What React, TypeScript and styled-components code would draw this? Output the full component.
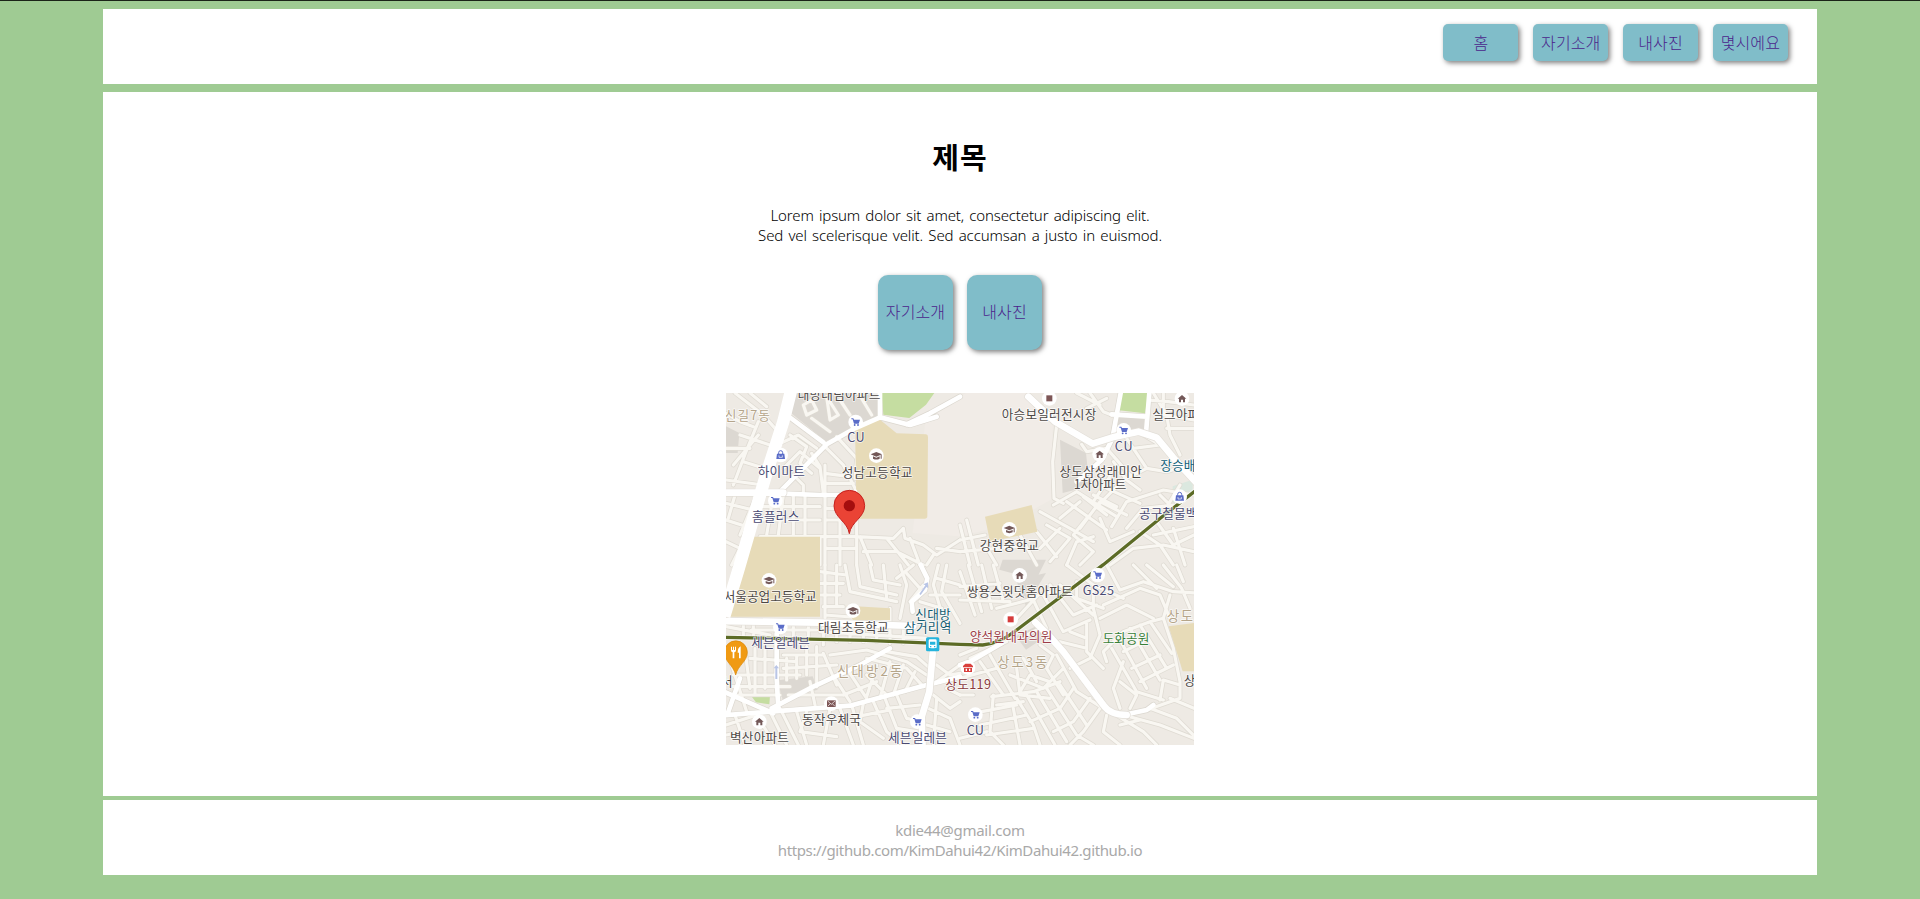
import React from "react";
import styled, { createGlobalStyle } from "styled-components";

const GlobalStyle = createGlobalStyle`
  * { box-sizing: border-box; }
  body {
    margin: 0;
    background: #9fcb93;
    font-family: "Noto Sans", "Noto Sans CJK KR", sans-serif;
    font-size: 16px;
    line-height: 20px;
    color: #000;
  }
  p, h1 { margin: 0; }
`;

const Page = styled.div`
  height: 899px;
  border-top: 1px solid #1b2418;
  padding: 8px 103px 0;
  display: flex;
  flex-direction: column;
  overflow: hidden;
`;

const Header = styled.header`
  flex: none;
  height: 75px;
  margin-bottom: 8px;
  background: #fff;
  display: flex;
  align-items: flex-start;
  justify-content: flex-end;
  gap: 14.8px;
  padding: 15px 29.2px 0 0;
`;

const LinkButton = styled.a<{ $square?: boolean }>`
  width: 75px;
  height: ${(p) => (p.$square ? 75 : 37.4)}px;
  padding-bottom: ${(p) => (p.$square ? 3 : 1.5)}px;
  border-radius: ${(p) => (p.$square ? 10 : 5)}px;
  background: #80bdc9;
  box-shadow: 2px 2px 5px rgba(0, 0, 0, 0.5);
  color: #4b1f8b;
  font-family: "Noto Sans CJK KR", sans-serif;
  font-weight: 300;
  letter-spacing: 0.1px;
  text-decoration: none;
  white-space: nowrap;
  display: flex;
  align-items: center;
  justify-content: center;
`;

const Main = styled.main`
  flex: none;
  height: 704px;
  margin-bottom: 4px;
  padding-top: 44px;
  background: #fff;
  display: flex;
  flex-direction: column;
  align-items: center;
`;

const Title = styled.h1`
  font-family: "Noto Sans CJK KR", sans-serif;
  font-size: 29px;
  letter-spacing: 1px;
  line-height: 40px;
  font-weight: 700;
`;

const Intro = styled.div`
  margin-top: 29px;
  text-align: center;
  font-size: 15px;
  font-weight: 350;
  word-spacing: 1.5px;
`;

const Line = styled.p<{ $spacing: number }>`
  letter-spacing: ${(p) => p.$spacing}px;
  white-space: nowrap;
`;

const Shortcuts = styled.div`
  display: flex;
  gap: 14px;
  margin: 30px 0 43px;
`;

const MapView = styled.svg`
  display: block;
  width: 468px;
  height: 352px;
  overflow: hidden;
`;

const Footer = styled.footer`
  flex: none;
  height: 75px;
  padding-top: 20px;
  background: #fff;
  color: #a9a9a9;
  text-align: center;
  font-size: 15px;
`;

/* The map is made of four tiles; each has its own origin. */
type Tile = { x: number; y: number; minor: string; street: string; major: string };

const tiles: Tile[] = [
  {
    x: -18,
    y: -24,
    minor:
      "M18 85L60 110L100 125M45 24L130 90L165 130M90 24L140 65M115 110L80 195L40 300M18 190H90M60 150L150 180M70 230L150 255M18 285L130 300M40 240L115 150M18 355L120 380M18 405L95 430M110 330L60 450M45 330L25 400M18 470L60 490L35 540M210 150L260 185L240 235L275 265M170 180L235 150L290 190M190 250L240 200L300 250M220 270L250 300V325M275 205L300 245L310 325M315 185L370 240L405 310M350 155L410 220L405 280M315 265L390 275M315 295H400M315 240V540M360 330V540M300 455L410 455L520 460L550 430M410 400V540M420 455L455 540M315 370H405M315 405H405M160 330L140 450M190 330L175 450M220 330V450M255 330V450M130 365H300M120 405H300M120 455H300V540M315 490H410M430 500H530L610 540M500 460L565 540M550 430L555 460L610 480L650 510L720 465M570 460L600 540M640 510L620 540M650 490L720 500M250 60L275 45L290 75L260 90ZM275 100L330 140M320 35L355 90L330 105ZM360 45L390 90M415 24L455 90",
    street: "M200 90L310 172M650 95L570 120L480 97L405 130L320 178L180 320M480 24V98M720 35L630 85L560 118M190 326L300 330L400 330M405 320L415 380",
    major: "M215 10L190 110L135 280L55 555L15 680M0 323H190",
  },
  {
    x: 702,
    y: -24,
    minor:
      "M290 120L278 230L282 340L310 355M365 178L380 200L440 190L510 270M420 60L350 24M390 24L430 80L455 90M440 40L380 70M580 24L620 90L630 150M560 45L625 50L702 60M610 24V90L702 105M620 130H702M630 150L660 210M600 180L550 150M500 160L560 250L620 260L702 235M520 190L600 180M560 250L490 285L420 355M460 230L500 285L540 315M450 275L400 350M280 360L350 320L470 395M300 400L360 350M240 380L330 430L400 470M320 350L440 435M370 335L440 390M400 330L470 365M440 310L540 355M360 430L420 350L500 390M260 420L330 460L270 530M300 430L240 490M380 400L340 450L400 500L360 540M420 400L450 470L520 440M400 455L350 470L320 540M455 425L500 350L610 315L702 330M500 430L550 370L640 360M580 450L702 425M450 540L520 490L610 480L702 500M540 440L600 480L640 540M590 410L640 480L702 450M640 430L675 540M0 420L30 540M20 405L55 540M0 465L75 450M0 500L170 485M75 480L110 540M180 450L230 540M230 440L290 515M660 300L630 350M600 330L650 380",
    street: "M482 24L458 155M455 88L560 95M568 24L558 145M460 155L425 225L350 290",
    major: "M205 35L285 110L398 176L465 155L535 140L590 158L640 218L720 305",
  },
  {
    x: -18,
    y: 516,
    minor:
      "M315 0V160M350 0V120M300 20L380 30M300 55H370M300 90H360M310 125H370M375 0L390 80L530 110M410 0L420 65L530 90M450 0L460 45L540 60M490 0L500 100M540 0L560 60L540 160M560 25L600 70M580 0L530 40M655 0L640 60L670 160M680 0L665 80L720 175M630 90H720M610 60L570 110M650 40L720 60M600 110L665 130M510 130V185M395 120L400 165M315 150L510 165M18 185L150 210M70 175V215M100 175V215M220 175V215M265 175V215M310 175V240M350 180V230M390 180V230M430 185V230M470 185V230M510 185V235M550 185V235M95 195H290M300 200L620 220M35 300L80 440M75 255L90 370M105 250V385M135 250V370M90 280L230 290M40 330H240M35 365H210M55 390H180M200 280V345M230 270V340M260 245V330M290 245V365M190 270H310M190 310L350 300M310 265L350 360M270 350L285 420M205 390H380M345 340L390 410M380 310L440 400M370 390L470 350M440 330L500 390M330 270L440 255L560 290L620 330M440 280L560 310L610 365M500 260L590 275L630 310M470 300L440 395M510 290L480 400M550 300L520 390M585 320L555 380M18 480L110 450L165 540M45 450L75 540M18 510L70 500M150 440L200 540M180 430L235 540M230 440L260 540M260 440L240 500L350 515M330 430L310 540M360 430L400 540M395 420L430 540M430 415L420 470L490 520M460 410L500 500L550 540M495 400L530 490L590 500M530 390L560 460L605 470M500 430L600 420M410 455L510 435M640 390L690 430L720 410M625 430L690 460L720 540M620 480L690 500M650 400L640 540M680 370L720 390M650 300L690 330L720 325M650 350L720 300",
    street: "M602 0L622 40L615 75L575 110L578 140M170 205V340L175 430M155 430L280 365L420 300L510 250M0 375L80 410L160 445M0 452L150 440L390 422L600 365L720 335M60 340L25 440",
    major: "M0 168L300 173L580 183M638 265L628 380L605 455L608 555",
  },
  {
    x: 702,
    y: 516,
    minor:
      "M0 20L45 150M25 0L65 140M65 0L95 130M100 0L130 110M0 65L120 55M0 105L150 110M110 130L225 100M170 160L235 90L280 80M220 105L260 190M250 90L310 200L390 165M270 60L340 150L410 120M300 60L400 150M320 0L400 60L490 100M350 50V100L430 130M400 60L400 130L420 210M430 120L540 70L600 90L630 160M440 0L480 75L550 50L640 80L720 85M520 0L590 70M560 0L640 65M610 0L665 70L690 130M650 0L670 50M630 90L610 160L640 250L660 350V400L560 435M610 160L570 170L635 265M570 170L490 200L430 260L440 290M540 180L620 310M510 190L600 345M480 225L560 370M455 250L530 380L610 405M580 160L500 120L420 160M490 260L550 230M515 310L600 270M540 350L640 300M600 405L610 345L660 360M490 290L460 370L480 430M480 350L530 390L510 430M420 210L390 280L330 310M380 170V260L430 310M330 200L380 220M300 230L380 250M250 185L180 220M240 240L280 270L260 310L310 390M290 270L350 380L430 430M310 310L250 370L150 330M270 350L210 330L180 380M170 310L180 390L270 400M190 280L230 350M30 280L140 230M60 290L130 390M90 270L165 400M0 340L110 310M95 395L220 380L300 350M170 400L220 480L240 540M200 390L285 540M230 380L320 530M260 370L350 510L400 540M300 360L380 480M340 370L300 430L210 470M390 400L340 470L280 500M420 430L370 500L330 540M110 420L190 410M100 390L90 500L130 540M65 440L170 420M60 480L200 450M80 510L220 490M160 430L180 540M440 450L430 500L480 540M460 445L550 500L590 540M490 450L600 480L702 520M570 430L650 460L700 510M630 400L702 430M480 480L540 465M0 270L50 250M0 390H40M0 520L80 500",
    street: "M125 235L30 290L0 300M490 450L560 435L580 420",
    major: "M226 172L270 215L310 260L430 420Q450 450 500 450",
  },
];

type LabelData = { x: number; y: number; w: number; text: string; color?: string; size?: number };

/* x is the left edge and y the baseline, both in map units. */
const labels: LabelData[] = [
  { x: 215, y: 19, w: 248, text: "대방대림아파트" },
  { x: -4, y: 80, w: 136, text: "신길7동", color: "#b5a58a", size: 38 },
  { x: 364, y: 148, w: 52, text: "CU", color: "#4a4a72", size: 38 },
  { x: 95, y: 248, w: 142, text: "하이마트", color: "#4a4a72" },
  { x: 347, y: 251, w: 212, text: "성남고등학교" },
  { x: 78, y: 383, w: 142, text: "홈플러스", color: "#4a4a72" },
  { x: 827, y: 79, w: 284, text: "아승보일러전시장" },
  { x: 1279, y: 79, w: 176, text: "실크아파트" },
  { x: 1166, y: 173, w: 54, text: "CU", color: "#4a4a72", size: 38 },
  { x: 1000, y: 248, w: 248, text: "상도삼성래미안" },
  { x: 1043, y: 287, w: 158, text: "1차아파트" },
  { x: 1303, y: 230, w: 140, text: "장승배기", color: "#116078" },
  { x: 1239, y: 374, w: 210, text: "공구철물백화", color: "#4a4a72" },
  { x: 761, y: 471, w: 178, text: "강현중학교" },
  { x: -7, y: 625, w: 279, text: "서울공업고등학교" },
  { x: 276, y: 716, w: 212, text: "대림초등학교" },
  { x: 76, y: 761, w: 176, text: "세븐일레븐", color: "#4a4a72" },
  { x: 568, y: 679, w: 106, text: "신대방", color: "#125b70" },
  { x: 534, y: 718, w: 142, text: "삼거리역", color: "#125b70" },
  { x: 333, y: 848, w: 196, text: "신대방2동", color: "#b5a58a", size: 40 },
  { x: -15, y: 878, w: 35, text: "서" },
  { x: 228, y: 992, w: 177, text: "동작우체국" },
  { x: 12, y: 1047, w: 177, text: "벽산아파트" },
  { x: 486, y: 1047, w: 177, text: "세븐일레븐", color: "#4a4a72" },
  { x: 722, y: 609, w: 318, text: "쌍용스윗닷홈아파트" },
  { x: 1070, y: 607, w: 94, text: "GS25", color: "#4a4a72", size: 38 },
  { x: 731, y: 743, w: 248, text: "양석원내과의원", color: "#9c3d48" },
  { x: 1130, y: 750, w: 140, text: "도화공원", color: "#388038" },
  { x: 1323, y: 684, w: 120, text: "상도동", color: "#b5a58a", size: 40 },
  { x: 814, y: 822, w: 150, text: "상도3동", color: "#b5a58a", size: 40 },
  { x: 658, y: 889, w: 137, text: "상도119", color: "#8a3a3c" },
  { x: 1373, y: 875, w: 70, text: "상도" },
  { x: 722, y: 1026, w: 52, text: "CU", color: "#4a4a72", size: 38 },
];

type PoiKind = "cart" | "cap" | "home" | "bag" | "shop" | "clinic" | "mail" | "fire";

const pois: { x: number; y: number; kind: PoiKind }[] = [
  { x: 389, y: 87, kind: "cart" },
  { x: 164, y: 186, kind: "bag" },
  { x: 451, y: 188, kind: "cap" },
  { x: 148, y: 323, kind: "cart" },
  { x: 970, y: 16, kind: "shop" },
  { x: 1368, y: 17, kind: "home" },
  { x: 1193, y: 112, kind: "cart" },
  { x: 1121, y: 184, kind: "home" },
  { x: 1361, y: 311, kind: "bag" },
  { x: 850, y: 409, kind: "cap" },
  { x: 129, y: 562, kind: "cap" },
  { x: 381, y: 653, kind: "cap" },
  { x: 163, y: 702, kind: "cart" },
  { x: 316, y: 932, kind: "mail" },
  { x: 100, y: 986, kind: "home" },
  { x: 574, y: 986, kind: "cart" },
  { x: 881, y: 547, kind: "home" },
  { x: 1115, y: 546, kind: "cart" },
  { x: 854, y: 679, kind: "clinic" },
  { x: 726, y: 824, kind: "fire" },
  { x: 748, y: 965, kind: "cart" },
];

const Glyph = ({ kind }: { kind: PoiKind }) => {
  switch (kind) {
    case "cart":
      return (
        <g fill="#5a6cc8">
          <path d="M-13-11h6l2 4h18l-4 12H-5L-9-8h-4z" />
          <circle cx="-3" cy="9" r="2.8" />
          <circle cx="7" cy="9" r="2.8" />
        </g>
      );
    case "bag":
      return (
        <g>
          <path d="M-6-3v-4a6 6 0 0 1 12 0v4" fill="none" stroke="#5a6cc8" strokeWidth="3" />
          <path d="M-11-4h22l2 16h-26z" fill="#5a6cc8" />
          <path d="M-5 1v6h10v-6" fill="none" stroke="#fff" strokeWidth="2" />
        </g>
      );
    case "cap":
      return (
        <g fill="#735858">
          <path d="M-17-4L0-11L17-4L0 3z" />
          <path d="M-10 2v7q10 5 20 0v-7L0 6z" />
          <path d="M13-3h3v12h-3z" />
        </g>
      );
    case "home":
      return <path d="M-13 0L0-11L13 0H9v11H3V3h-6v8h-6V0z" fill="#735858" />;
    case "shop":
      return <path d="M-9-9H9V9H-9z" fill="#7d5656" />;
    case "clinic":
      return <path d="M-9-9H9V9H-9z" fill="#d63b3b" />;
    case "mail":
      return (
        <g>
          <path d="M-13-10h26v20h-26z" fill="#7d5656" />
          <path d="M-11-8L0 2L11-8M-11 8L-3 0M11 8L3 0" fill="none" stroke="#fff" strokeWidth="2" />
        </g>
      );
    case "fire":
      return (
        <g fill="#d9403c">
          <path d="M-15-5L-8-12H8L15-5v4h-30zM-12 1H12V13H-12z" />
          <path d="M-7 3h4v7h-4zM3 3h4v7h-4z" fill="#fff" />
        </g>
      );
  }
};

const Roads = ({ kind, width, color }: { kind: "minor" | "street" | "major"; width: number; color: string }) => (
  <g fill="none" stroke={color} strokeWidth={width} strokeLinejoin="round" strokeLinecap="round">
    {tiles.map((t) => (
      <path key={`${t.x}${t.y}`} transform={`translate(${t.x} ${t.y})`} d={t[kind]} />
    ))}
  </g>
);

const LocationMap = () => (
  <MapView viewBox="0 0 1404 1056" role="img" aria-label="오시는 길">
    <path fill="#eeeae4" d="M0 0H1404V1056H0z" />
    <path fill="#f1ece7" d="M600 70L720 0H900L980 100L975 320L830 400L700 430L560 420z" />
    <g fill="#dcd8d2">
      <path d="M205 0H465V70L300 145L195 60z" />
      <path d="M0 100L40 120L35 180H0zM1002 140L1080 180L1090 280L1010 300zM1166 72L1260 75V110H1160z" />
      <path d="M155 862L260 850L275 890L170 920zM830 500H960L930 560L820 530zM870 560L960 540L900 640z" />
      <path d="M870 730L930 700L960 730L900 770z" />
    </g>
    <path fill="#c5dda1" d="M75 908H132L130 934L90 928z" />
    <path fill="#dbe8df" d="M1340 280L1400 260V310L1340 330z" />
    <Roads kind="minor" width={14} color="#dfdbd3" />
    <Roads kind="street" width={18} color="#dcd8d0" />
    <Roads kind="minor" width={9.5} color="#f9f7f2" />
    <g fill="#e7dbb8">
      <path d="M387 102L462 80L512 121L600 124Q606 124 606 132L604 370Q604 377 596 377H392z" />
      <path d="M80 431H282V671H5z" />
      <path d="M777 371L917 336L934 416L792 446z" />
      <path d="M362 638L492 646V681H380z" />
      <path d="M1328 700L1404 690V835H1370z" />
    </g>
    <path fill="#c5dda1" d="M467 0H625L600 35L550 75L472 65zM1182 0H1267L1257 61L1172 51z" />
    <Roads kind="street" width={14} color="#fff" />
    <Roads kind="major" width={24} color="#e3dfd8" />
    <Roads kind="major" width={20} color="#fff" />
    <path d="M197-14L172 86L117 256L37 531L-5 670" fill="none" stroke="#fff" strokeWidth="37" />
    <path
      d="M-5 733L420 742L700 754L770 756Q820 752 872 711L1132 515L1300 378L1412 290"
      fill="none"
      stroke="#fff"
      strokeOpacity=".65"
      strokeWidth="15"
    />
    <path
      d="M-5 733L420 742L700 754L770 756Q820 752 872 711L1132 515L1300 378L1412 290"
      fill="none"
      stroke="#5c6b26"
      strokeWidth="10"
    />
    <path d="M580 603L598 577L592 574L606 568L606 585L601 582L584 606zM148 858V826H143L151 816L159 826H154V858z" fill="#b9c5e6" />
    {pois.map((p) => (
      <g key={`${p.x}-${p.y}`} transform={`translate(${p.x} ${p.y})`}>
        <circle r="22" fill="#fff" />
        <Glyph kind={p.kind} />
      </g>
    ))}
    <g fontFamily='"Noto Sans CJK KR", sans-serif' strokeLinejoin="round">
      {labels.map((l) => (
        <text
          key={`${l.text}-${l.x}`}
          x={l.x}
          y={l.y}
          fontSize={l.size ?? 38}
          fill={l.color ?? "#4d4846"}
          stroke="#fff"
          strokeOpacity=".75"
          strokeWidth="5"
          paintOrder="stroke"
          textLength={l.w}
          lengthAdjust="spacing"
        >
          {l.text}
        </text>
      ))}
    </g>
    <g transform="translate(620 754)">
      <rect x="-20" y="-21" width="40" height="42" rx="5" fill="#25b4dc" />
      <rect x="-12" y="-15" width="24" height="27" rx="4" fill="#fff" />
      <path d="M-8-8H8V1H-8zM-8 5h4v4h-4zM4 5h4v4h-4zM-10 12h5l-3 6h-5zM10 12H5l3 6h5z" fill="#25b4dc" />
    </g>
    <g transform="translate(30 778)">
      <path d="M-1 68C-8 38-35 28-35 0A34 34 0 0 1 34 0C34 28 6 38-1 68z" fill="#f09a13" stroke="#d98606" strokeWidth="2" />
      <path d="M-15-17v11q0 6 5 6v18h5V0q5 0 5-6v-11h-3v10h-3v-10h-3v10h-3v-10zM14-18q-9 4-9 19h4v17h5z" fill="#fff" />
    </g>
    <g transform="translate(370 338)">
      <path d="M0 84C-5 48-46 36-46 0A46 46 0 0 1 46 0C46 36 5 48 0 84z" fill="#ea4335" stroke="#c5221f" strokeWidth="3" />
      <circle r="17" fill="#a50e0e" />
    </g>
  </MapView>
);

const App = () => (
  <>
    <GlobalStyle />
    <Page>
      <Header>
        <LinkButton>홈</LinkButton>
        <LinkButton>자기소개</LinkButton>
        <LinkButton>내사진</LinkButton>
        <LinkButton>몇시에요</LinkButton>
      </Header>
      <Main>
        <Title>제목</Title>
        <Intro>
          <Line $spacing={-0.14}>Lorem ipsum dolor sit amet, consectetur adipiscing elit.</Line>
          <Line $spacing={-0.13}>Sed vel scelerisque velit. Sed accumsan a justo in euismod.</Line>
        </Intro>
        <Shortcuts>
          <LinkButton $square>자기소개</LinkButton>
          <LinkButton $square>내사진</LinkButton>
        </Shortcuts>
        <LocationMap />
      </Main>
      <Footer>
        <Line $spacing={-0.27}>kdie44@gmail.com</Line>
        <Line $spacing={-0.37}>https://github.com/KimDahui42/KimDahui42.github.io</Line>
      </Footer>
    </Page>
  </>
);

export default App;
